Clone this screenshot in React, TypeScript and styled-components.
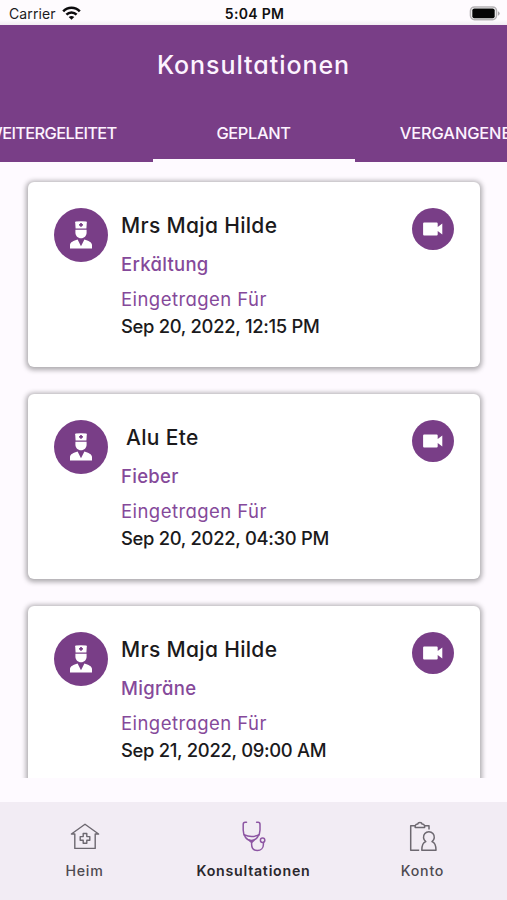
import React from "react";
import styled, { createGlobalStyle } from "styled-components";

const PURPLE = "#793e87";

const GlobalStyle = createGlobalStyle`
  * { box-sizing: border-box; }
  body { margin: 0; background: #fefaff; }
`;

const Screen = styled.div`
  width: 507px;
  height: 900px;
  display: flex;
  flex-direction: column;
  overflow: hidden;
  background: #fefaff;
  color: #1b1a1c;
  font-family: Inter, "Liberation Sans", sans-serif;
  white-space: nowrap;
`;

const StatusBar = styled.div`
  height: 25px;
  flex: none;
  display: grid;
  grid-template-columns: 1fr auto 1fr;
  align-items: center;
  padding: 2px 7px 0 9px;
  background: linear-gradient(#fefbfe 80%, #f1ecf2);
  font-size: 14px;
  line-height: 22px;
  color: #1c1b1d;
`;

const Carrier = styled.div`
  display: flex;
  align-items: center;
  gap: 6px;
  letter-spacing: 0.1px;
`;

const Clock = styled.div`
  font-weight: 600;
  color: #111;
  letter-spacing: 0.3px;
`;

const BatteryHolder = styled.div`
  display: flex;
  justify-content: flex-end;
`;

const Header = styled.header`
  height: 137px;
  flex: none;
  display: flex;
  flex-direction: column;
  justify-content: space-between;
  background: ${PURPLE};
  color: #fdf3ff;
  font-feature-settings: "cv11";
`;

const Title = styled.h1`
  margin: 22px 0 0;
  text-align: center;
  font-size: 25px;
  line-height: 36px;
  font-weight: 500;
  letter-spacing: 0.95px;
`;

const Tabs = styled.nav`
  display: flex;
  justify-content: center;
`;

const Tab = styled.div<{ $active?: boolean; $tracking: number }>`
  width: 202px;
  height: 56px;
  flex: none;
  text-align: center;
  padding-top: 13px;
  font-size: 16.4px;
  line-height: 28px;
  font-weight: 500;
  letter-spacing: ${(p) => p.$tracking}px;
  border-bottom: 3px solid ${(p) => (p.$active ? "#fefaff" : "transparent")};
`;

const List = styled.main`
  height: 616px;
  flex: none;
  overflow: hidden;
  display: flex;
  flex-direction: column;
  gap: 27px;
  padding: 20px 27px 0 28px;
`;

const Card = styled.article`
  height: 185px;
  flex: none;
  display: flex;
  align-items: flex-start;
  padding: 26.4px 26.5px 0 25.7px;
  border-radius: 6px;
  background: #fff;
  box-shadow: 0 1px 5px 1.5px rgba(0, 0, 0, 0.32);
`;

const Disc = styled.div<{ $size: number }>`
  width: ${(p) => p.$size}px;
  height: ${(p) => p.$size}px;
  flex: none;
  border-radius: 50%;
  background: ${PURPLE};
  display: grid;
  place-items: center;
`;

const Details = styled.div`
  flex: 1;
  padding: 2.6px 0 0 13.3px;
  font-feature-settings: "cv11";
`;

const Name = styled.h2<{ $indent?: boolean }>`
  margin: 0 0 11px;
  padding-left: ${(p) => (p.$indent ? 5 : 0)}px;
  font-size: 21px;
  line-height: 30px;
  font-weight: 500;
  letter-spacing: 0.33px;
`;

const Reason = styled.div`
  margin-bottom: 11px;
  font-size: 18.5px;
  line-height: 24px;
  font-weight: 500;
  letter-spacing: 0.3px;
  color: #85499a;
`;

const Label = styled.div`
  font-size: 18.5px;
  line-height: 24px;
  letter-spacing: 0.45px;
  color: #85499a;
`;

const When = styled.div`
  padding-top: 1px;
  font-size: 18.4px;
  line-height: 28px;
  font-weight: 500;
  letter-spacing: -0.3px;
`;

const BottomNav = styled.nav`
  height: 98px;
  margin-top: auto;
  flex: none;
  display: grid;
  grid-template-columns: repeat(3, 1fr);
  background: #f2ecf4;
`;

const NavItem = styled.div<{ $active?: boolean }>`
  display: flex;
  flex-direction: column;
  align-items: center;
  padding-top: 18px;
  color: ${(p) => (p.$active ? "#2a272c" : "#4e4a51")};
  font-size: 14.2px;
  font-weight: ${(p) => (p.$active ? 600 : 500)};
  line-height: 20px;
  letter-spacing: 0.75px;

  svg { margin-bottom: 9px; }
`;

const Wifi = () => (
  <svg width="19" height="15" viewBox="0 0 19 15">
    <g fill="none" stroke="#0c0b0d" strokeWidth="2.5">
      <path d="M1.2 5.3C5.8.4 13.2.4 17.8 5.3" />
      <path d="M4.4 8.6C7.2 5.7 11.8 5.7 14.6 8.6" />
    </g>
    <path d="M9.5 13.8 6.7 11Q9.5 8.8 12.3 11Z" fill="#0c0b0d" />
  </svg>
);

const Battery = () => (
  <svg width="31" height="15" viewBox="0 0 31 15">
    <rect x="1.5" y="1" width="26" height="12.6" rx="4" fill="#fff" stroke="#b5b2b5" strokeWidth="1.6" />
    <rect x="3.3" y="2.4" width="22.4" height="9.8" rx="2" fill="#050505" />
    <path d="M29 5.2Q30.7 6 30.7 7.5T29 9.8Z" fill="#a9a6aa" />
  </svg>
);

const Doctor = () => (
  <svg width="22" height="28" viewBox="0 0 22 28" fill="#fff">
    <path d="M5.2 1.2Q5.2.6 5.9.5Q11-.1 16.1.5Q16.8.6 16.8 1.2L16.4 7.5H5.6Z" />
    <path d="M5.4 8.7H16.6V11.5C16.6 14.8 14.2 17.3 11 17.3S5.4 14.8 5.4 11.5Z" />
    <path d="M0 27.6V24C0 21 3.6 19.6 7.6 18.4L11 25.2 14.4 18.4C18.4 19.6 22 21 22 24V27.6Z" />
    <path d="M11 2V5.8M9.1 3.9H12.9" stroke={PURPLE} strokeWidth="1.7" />
  </svg>
);

const Camera = () => (
  <svg width="20" height="14" viewBox="0 0 20 14" fill="#fff">
    <path d="M1.1.5H13.6Q14.7.5 14.7 1.6V5L19.3 1.5V12.5L14.7 9V12.4Q14.7 13.5 13.6 13.5H1.1Q.1 13.5.1 12.4V1.6Q.1.5 1.1.5Z" />
  </svg>
);

const House = () => (
  <svg width="30" height="32" viewBox="0 0 30 32" fill="none" stroke="#6d6870" strokeWidth="1.4" strokeLinejoin="round">
    <path d="M4.8 14H1.4L15 4.2 28.6 14H25.2V28.4H4.8Z" />
    <path d="M13.2 13.5H16.8V16.6H19.8V20.2H16.8V23.3H13.2V20.2H10.2V16.6H13.2Z" />
  </svg>
);

const Stethoscope = () => (
  <svg width="30" height="32" viewBox="0 0 30 32" fill="none" stroke="#8d55a3" strokeWidth="1.5" strokeLinecap="round">
    <path d="M7.5 2.3H6.2Q4.2 2.3 4.2 4.4V10C4.2 15.8 7.8 20.6 12.3 20.6S21 15.8 21 10V4.4Q21 2.3 19 2.3H17.6" />
    <path d="M5 14.8Q12.6 18.2 20.2 14.8" />
    <path d="M10.4 20.4 12.6 22.4 14.9 20.4" />
    <path d="M12.6 22.4V24.2C12.6 28.2 15 30.5 18.4 30.5S24.4 28 24.4 24.5V22.6" />
    <circle cx="23.6" cy="20.2" r="2.2" />
  </svg>
);

const Clipboard = () => (
  <svg width="30" height="32" viewBox="0 0 30 32" fill="none" stroke="#6d6870" strokeWidth="1.5" strokeLinejoin="round">
    <path d="M11.2 30.3H2.7V5.8H7.2M16.6 5.8H21V9.5" />
    <path d="M7.2 7.4V5.6Q8 4 9.7 4 10 2.4 11.9 2.4T14.1 4Q15.8 4 16.6 5.6V7.4Z" />
    <path d="M17.8 21.6A5.4 5.4 0 1 1 24 21.6C27 22.5 28 25 28 30.3H13.8C13.8 25 14.8 22.5 17.8 21.6Z" />
  </svg>
);

interface Appointment {
  name: string;
  reason: string;
  when: string;
  indent?: boolean;
}

const appointments: Appointment[] = [
  { name: "Mrs Maja Hilde", reason: "Erkältung", when: "Sep 20, 2022, 12:15 PM" },
  { name: "Alu Ete", reason: "Fieber", when: "Sep 20, 2022, 04:30 PM", indent: true },
  { name: "Mrs Maja Hilde", reason: "Migräne", when: "Sep 21, 2022, 09:00 AM" },
];

export default function App() {
  return (
    <>
      <GlobalStyle />
      <Screen>
        <StatusBar>
          <Carrier>Carrier <Wifi /></Carrier>
          <Clock>5:04 PM</Clock>
          <BatteryHolder><Battery /></BatteryHolder>
        </StatusBar>
        <Header>
          <Title>Konsultationen</Title>
          <Tabs>
            <Tab $tracking={-0.62}>WEITERGELEITET</Tab>
            <Tab $active $tracking={-0.35}>GEPLANT</Tab>
            <Tab $tracking={-0.1}>VERGANGENE</Tab>
          </Tabs>
        </Header>
        <List>
          {appointments.map((a) => (
            <Card key={a.when}>
              <Disc $size={54}><Doctor /></Disc>
              <Details>
                <Name $indent={a.indent}>{a.name}</Name>
                <Reason>{a.reason}</Reason>
                <Label>Eingetragen Für</Label>
                <When>{a.when}</When>
              </Details>
              <Disc $size={42}><Camera /></Disc>
            </Card>
          ))}
        </List>
        <BottomNav>
          <NavItem><House />Heim</NavItem>
          <NavItem $active><Stethoscope />Konsultationen</NavItem>
          <NavItem><Clipboard />Konto</NavItem>
        </BottomNav>
      </Screen>
    </>
  );
}
